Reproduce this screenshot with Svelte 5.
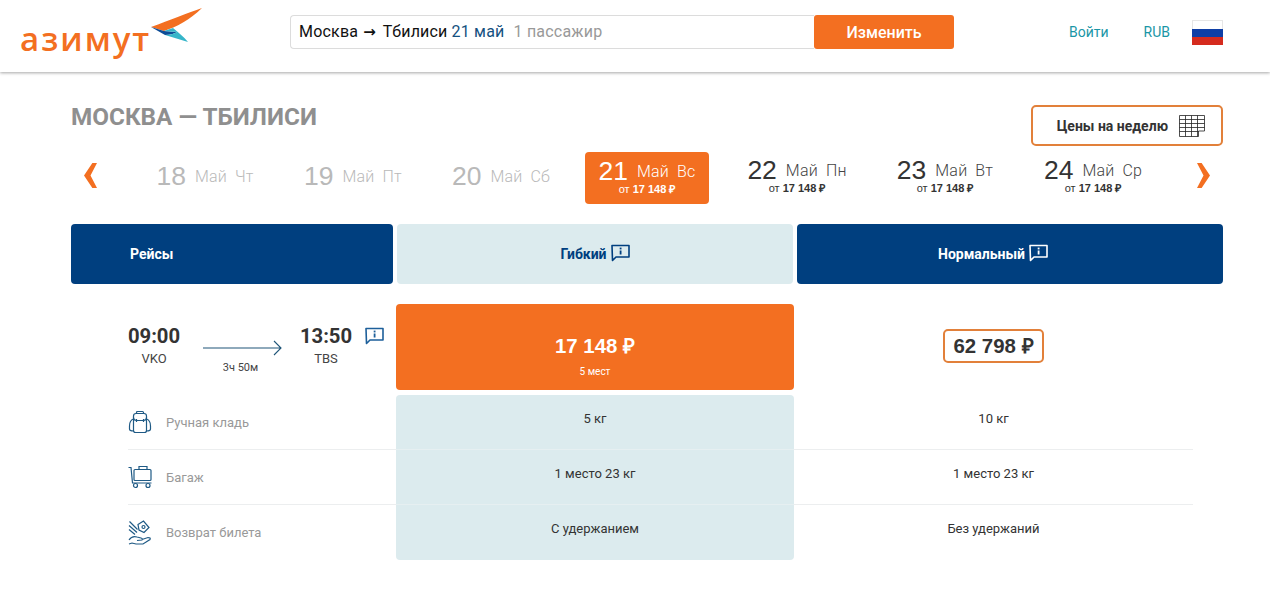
<script>
  const days = [
    { n: 18, w: 'Чт', off: true },
    { n: 19, w: 'Пт', off: true },
    { n: 20, w: 'Сб', off: true },
    { n: 21, w: 'Вс', price: true, active: true },
    { n: 22, w: 'Пн', price: true },
    { n: 23, w: 'Вт', price: true },
    { n: 24, w: 'Ср', price: true }
  ]

  const rows = [
    { icon: 'bag', label: 'Ручная кладь', flex: '5 кг', normal: '10 кг' },
    { icon: 'cart', label: 'Багаж', flex: '1 место 23 кг', normal: '1 место 23 кг' },
    { icon: 'back', label: 'Возврат билета', flex: 'С удержанием', normal: 'Без удержаний' }
  ]
</script>

{#snippet info(cls)}
  <svg class={cls} width="19" height="18" viewBox="0 0 19 18" fill="none">
    <path d="M1 1.500h17v11.500H5L1.500 16.500z" stroke="currentColor" stroke-width="1.600" stroke-linejoin="round" />
    <rect x="8.700" y="3.600" width="1.800" height="1.800" fill="currentColor" />
    <rect x="8.700" y="6.500" width="1.800" height="4" fill="currentColor" />
  </svg>
{/snippet}

{#snippet chevron(flip)}
  <svg class="chev" class:right={flip} width="13" height="27" viewBox="0 0 14 27">
    <polygon points="9,0 14,0 7,13.500 14,27 9,27 0,13.500" fill="#f36f21" />
  </svg>
{/snippet}

<div class="page">
  <header class="top">
    <div class="logo">
      <span class="logo-text">азимут</span>
      <svg class="swoosh" width="54" height="38" viewBox="0 0 54 38">
        <path d="M52 1 C38 6 20 13 1 20 L14 24 C26 20 40 13 52 1z" fill="#f36f21" />
        <path d="M1 20 L15 28 C20 28 24 27 27 25 L14 24z" fill="#0d4c96" />
        <path d="M15 28 L38 35 C34 30 28 25 23 21 C20 22 17 23 14 24 L27 25 C24 27 20 28 15 28z" fill="#35b5c9" />
      </svg>
    </div>
    <div class="search">
      <div class="query">
        <span class="route">Москва <span class="arrow">→</span> Тбилиси</span>
        <span class="date">21 май</span>
        <span class="pax">1 пассажир</span>
      </div>
      <button class="change">Изменить</button>
    </div>
    <nav class="links">
      <span class="login">Войти</span>
      <span class="currency">RUB</span>
      <span class="flag"><i></i><i></i><i></i></span>
    </nav>
  </header>

  <main class="content">
    <div class="title-row">
      <h1>МОСКВА — ТБИЛИСИ</h1>
      <button class="week">
        Цены на неделю
        <svg width="26" height="22" viewBox="0 0 26 22" fill="none" stroke="#222" stroke-width="0.8">
          <path d="M.5 .5h25v15.500h-6v5.500H.5z" />
          <path d="M.5 4.500h25M.5 8.500h25M.5 12.500h25M.5 16.500h19M6.500 .5v21M12.500 .5v21M18.500 .5v21" />
        </svg>
      </button>
    </div>

    <div class="dates">
      {@render chevron(false)}
      {#each days as d}
        <div class="day" class:off={d.off} class:active={d.active}>
          <div class="day-line">
            <span class="num">{d.n}</span>
            <span class="mon">Май</span>
            <span class="wd">{d.w}</span>
          </div>
          {#if d.price}
            <div class="from">от <b>17 148 ₽</b></div>
          {/if}
        </div>
      {/each}
      {@render chevron(true)}
    </div>

    <div class="heads">
      <div class="head">Рейсы</div>
      <div class="head light">Гибкий {@render info('hi')}</div>
      <div class="head center">Нормальный {@render info('hi')}</div>
    </div>

    <div class="fare">
      <div class="flight">
        <div class="point">
          <strong>09:00</strong>
          <span>VKO</span>
        </div>
        <div class="path">
          <svg width="79" height="16" viewBox="0 0 79 16" fill="none" stroke="#1f5578" stroke-width="1.100">
            <path d="M0 8h77.500M71 1l7 7-7 7" />
          </svg>
          <span>3ч 50м</span>
        </div>
        <div class="point">
          <strong>13:50</strong>
          <span>TBS</span>
        </div>
        {@render info('flight-info')}
      </div>
      <div class="cheap">
        <b>17 148 ₽</b>
        <span>5 мест</span>
      </div>
      <div class="other">
        <span class="other-price">62 798 ₽</span>
      </div>
    </div>

    <div class="details">
      {#each rows as r, i}
        <div class="row">
          <div class="name">
            <span class="ico">
              {#if r.icon === 'bag'}
                <svg width="24" height="24" viewBox="0 0 24 24" fill="none" stroke="#1f5a85" stroke-width="1.200">
                  <path d="M8.500 4V2.500q0-1 1-1h5q1 0 1 1V4" />
                  <path d="M5.500 6q0-2.500 2.500-2.500h8q2.500 0 2.500 2.500v14.500q0 2-2 2H7.500q-2 0-2-2z" />
                  <path d="M5.500 7.500q0 3 3 3h7q3 0 3-3M8.500 9v3M15.500 9v3" />
                  <path d="M5.500 9C2.500 10 1.500 12 1.500 16v3q0 2 4 2M18.500 9c3 1 4 3 4 7v3q0 2-4 2" />
                </svg>
              {:else if r.icon === 'cart'}
                <svg width="25" height="24" viewBox="0 0 25 24" fill="none" stroke="#1f5a85" stroke-width="1.200">
                  <path d="M.5 2.500h2.500l1.500 15.500h19" />
                  <rect x="6" y="4.500" width="17" height="11" rx="1" />
                  <path d="M11 4.500V1.500h8v3" />
                  <circle cx="7.500" cy="20.500" r="2" />
                  <circle cx="20" cy="20.500" r="2" />
                </svg>
              {:else}
                <svg width="24" height="26" viewBox="0 0 24 26" fill="none" stroke="#1f5a85" stroke-width="1.200">
                  <path d="M1.500 1.500l8 8M1 5.500l8 7M1 9.500l6 5" />
                  <path d="M10 4.500l5.500-3.500 5.500 6.500-5 5-5-2.500z" />
                  <circle cx="15.500" cy="7" r="1.500" />
                  <path d="M1 20c2-3 5-4 8-3l4 1q2 .5 1 2l-5 .5M14 19.500l6-2q3 0 2 2l-7 4.500H8l-4-1-3 1" />
                </svg>
              {/if}
            </span>
            {r.label}
          </div>
          <div class="flex-cell" class:first={i === 0} class:last={i === 2}>{r.flex}</div>
          <div class="norm-cell">{r.normal}</div>
        </div>
      {/each}
    </div>
  </main>
</div>

<style>
  :global(body) {
    margin: 0;
    background: #fff;
    font-family: Roboto, "Liberation Sans", sans-serif;
    color: #333;
  }

  .page {
    width: 1270px;
    height: 593px;
    overflow: hidden;
  }

  .top {
    height: 72px;
    box-sizing: border-box;
    display: flex;
    align-items: flex-start;
    padding: 15px 47px 0 0;
    box-shadow: 0 1px 3px rgba(0, 0, 0, 0.35);
  }

  .logo {
    width: 290px;
    height: 57px;
    margin-top: -15px;
    position: relative;
    flex: none;
  }

  .logo-text {
    position: absolute;
    left: 20px;
    top: 17px;
    font: 600 33px/44px "Open Sans", sans-serif;
    letter-spacing: 2px;
    color: #f36f21;
  }

  .swoosh {
    position: absolute;
    left: 150px;
    top: 7px;
  }

  .search {
    display: flex;
    width: 664px;
    height: 34px;
    flex: none;
  }

  .query {
    flex: 1;
    box-sizing: border-box;
    border: 1px solid #dcdcdc;
    border-right: none;
    border-radius: 4px 0 0 4px;
    padding: 0 8px;
    font-size: 16px;
    letter-spacing: 0.2px;
    line-height: 31px;
    color: #111;
    display: flex;
    gap: 4px;
  }

  .arrow {
    font-family: "DejaVu Sans", sans-serif;
    font-size: 15px;
    font-weight: 700;
    letter-spacing: 0;
    margin: 0 3px 0 1px;
  }

  .date {
    color: #15517f;
  }

  .pax {
    color: #999;
    margin-left: 5px;
  }

  .change {
    width: 140px;
    border: none;
    border-radius: 3px;
    background: #f36f21;
    color: #fff;
    font: 500 16px Roboto, sans-serif;
  }

  .links {
    margin-left: auto;
    display: flex;
    align-items: center;
    height: 34px;
    font-size: 14px;
    color: #1a96a6;
  }

  .currency {
    margin-left: 35px;
  }

  .flag {
    margin-left: 22px;
    width: 31px;
    height: 25px;
    display: flex;
    flex-direction: column;
    margin-top: 1px;
  }

  .flag i {
    flex: 1;
  }

  .flag i:nth-child(1) {
    background: #fff;
    border: 1px solid #e6e6e6;
    border-bottom: none;
  }

  .flag i:nth-child(2) {
    background: #0f3fa6;
  }

  .flag i:nth-child(3) {
    background: #d52b1e;
  }

  .content {
    padding: 33px 47px 0 71px;
  }

  .title-row {
    display: flex;
    justify-content: space-between;
    align-items: flex-start;
    height: 47px;
  }

  h1 {
    margin: 0;
    font: 700 24.300px/24px Roboto, sans-serif;
    color: #8f8f8f;
  }

  .week {
    width: 192px;
    height: 41px;
    box-sizing: border-box;
    border: 2px solid #e2803a;
    border-radius: 5px;
    background: #fff;
    color: #333;
    font: 700 14px Roboto, sans-serif;
    display: flex;
    align-items: center;
    justify-content: flex-end;
    gap: 11px;
    padding: 0 16px 0 0;
  }

  .dates {
    display: grid;
    grid-template-columns: 60px repeat(7, 148px) 56px;
    height: 52px;
    margin-bottom: 20px;
    align-items: start;
  }

  .chev {
    display: block;
    margin: 10px 0 0 13px;
  }

  .chev.right {
    transform: scaleX(-1);
    margin-left: 30px;
  }

  .day {
    justify-self: center;
    width: 124px;
    height: 52px;
    box-sizing: border-box;
    border-radius: 4px;
    display: flex;
    flex-direction: column;
    align-items: center;
    padding-top: 6px;
  }

  .day-line {
    display: flex;
    align-items: center;
    height: 25px;
    font: 300 16px/25px Roboto, sans-serif;
    color: #444;
    letter-spacing: 0.2px;
  }

  .num {
    font: 400 26.500px/25px "Liberation Sans", sans-serif;
    color: #333;
    letter-spacing: 0;
    margin-right: 9px;
  }

  .wd {
    margin-left: 8px;
  }

  .day.off {
    padding-top: 12px;
  }

  .day.off .day-line,
  .day.off .num {
    color: #b9b9b9;
  }

  .day.active {
    background: #f36f21;
    padding-top: 7px;
    margin-right: 4px;
  }

  .day.active .day-line,
  .day.active .num,
  .day.active .from {
    color: #fff;
  }

  .from {
    font: 400 11px/10px "Liberation Sans", sans-serif;
    color: #333;
  }

  .heads {
    display: grid;
    grid-template-columns: 322px 396px 426px;
    gap: 4px;
    margin-bottom: 20px;
  }

  .head {
    height: 60px;
    border-radius: 4px;
    background: #003f7f;
    color: #fff;
    font-size: 14px;
    font-weight: 700;
    display: flex;
    align-items: center;
    padding-left: 59px;
  }

  .head.light,
  .head.center {
    padding: 0;
    justify-content: center;
    gap: 4px;
  }

  .head.center {
    padding-right: 34px;
  }

  .head.light {
    background: #dcebee;
    color: #003f7f;
  }

  .hi {
    margin-top: -2px;
  }

  .fare,
  .row {
    display: grid;
    grid-template-columns: 268px 398px 399px;
    width: 1065px;
    margin-left: 57px;
  }

  .fare {
    height: 86px;
    margin-bottom: 5px;
  }

  .flight {
    display: flex;
    align-items: flex-start;
    padding-top: 20px;
  }

  .point {
    display: flex;
    flex-direction: column;
    align-items: center;
    width: 52px;
  }

  .point strong {
    font-size: 20.300px;
    font-weight: 700;
    line-height: 24px;
    color: #333;
  }

  .point span {
    font-size: 13px;
    line-height: 22px;
    color: #444;
  }

  .path {
    margin: 16px 18px 0 23px;
    width: 79px;
    display: flex;
    flex-direction: column;
    align-items: center;
    font-size: 11px;
    color: #444;
    gap: 5px;
  }

  .path span {
    padding-right: 4px;
  }

  .flight-info {
    color: #1d5f9a;
    margin: 3px 0 0 13px;
    flex: none;
  }

  .cheap {
    background: #f36f21;
    border-radius: 4px;
    color: #fff;
    display: flex;
    flex-direction: column;
    align-items: center;
    padding-top: 30px;
    box-sizing: border-box;
  }

  .cheap b {
    font: 700 20.400px/24px "Liberation Sans", sans-serif;
  }

  .cheap span {
    font-size: 10px;
    line-height: 12px;
    margin-top: 8px;
  }

  .other {
    display: flex;
    justify-content: center;
    padding-top: 25px;
  }

  .other-price {
    height: 34px;
    box-sizing: border-box;
    border: 2px solid #e2803a;
    border-radius: 5px;
    padding: 0 8px;
    font: 700 20.400px/30px "Liberation Sans", sans-serif;
    color: #333;
  }

  .row {
    height: 55px;
    font-size: 13px;
    color: #333;
    box-shadow: inset 0 -1px 0 #eceeef;
  }

  .row:last-child {
    box-shadow: none;
  }

  .name {
    display: flex;
    align-items: flex-start;
    color: #999;
    padding-top: 20px;
    line-height: 15px;
    position: relative;
    padding-left: 38px;
  }

  .ico {
    position: absolute;
    left: 0;
    top: 15px;
  }

  .flex-cell,
  .norm-cell {
    text-align: center;
    padding-top: 16px;
    line-height: 16px;
  }

  .flex-cell {
    background: #dcebee;
    box-shadow: inset 0 -1px 0 #e6eff1;
  }

  .flex-cell.first {
    border-radius: 4px 4px 0 0;
  }

  .flex-cell.last {
    border-radius: 0 0 4px 4px;
    box-shadow: none;
  }
</style>
